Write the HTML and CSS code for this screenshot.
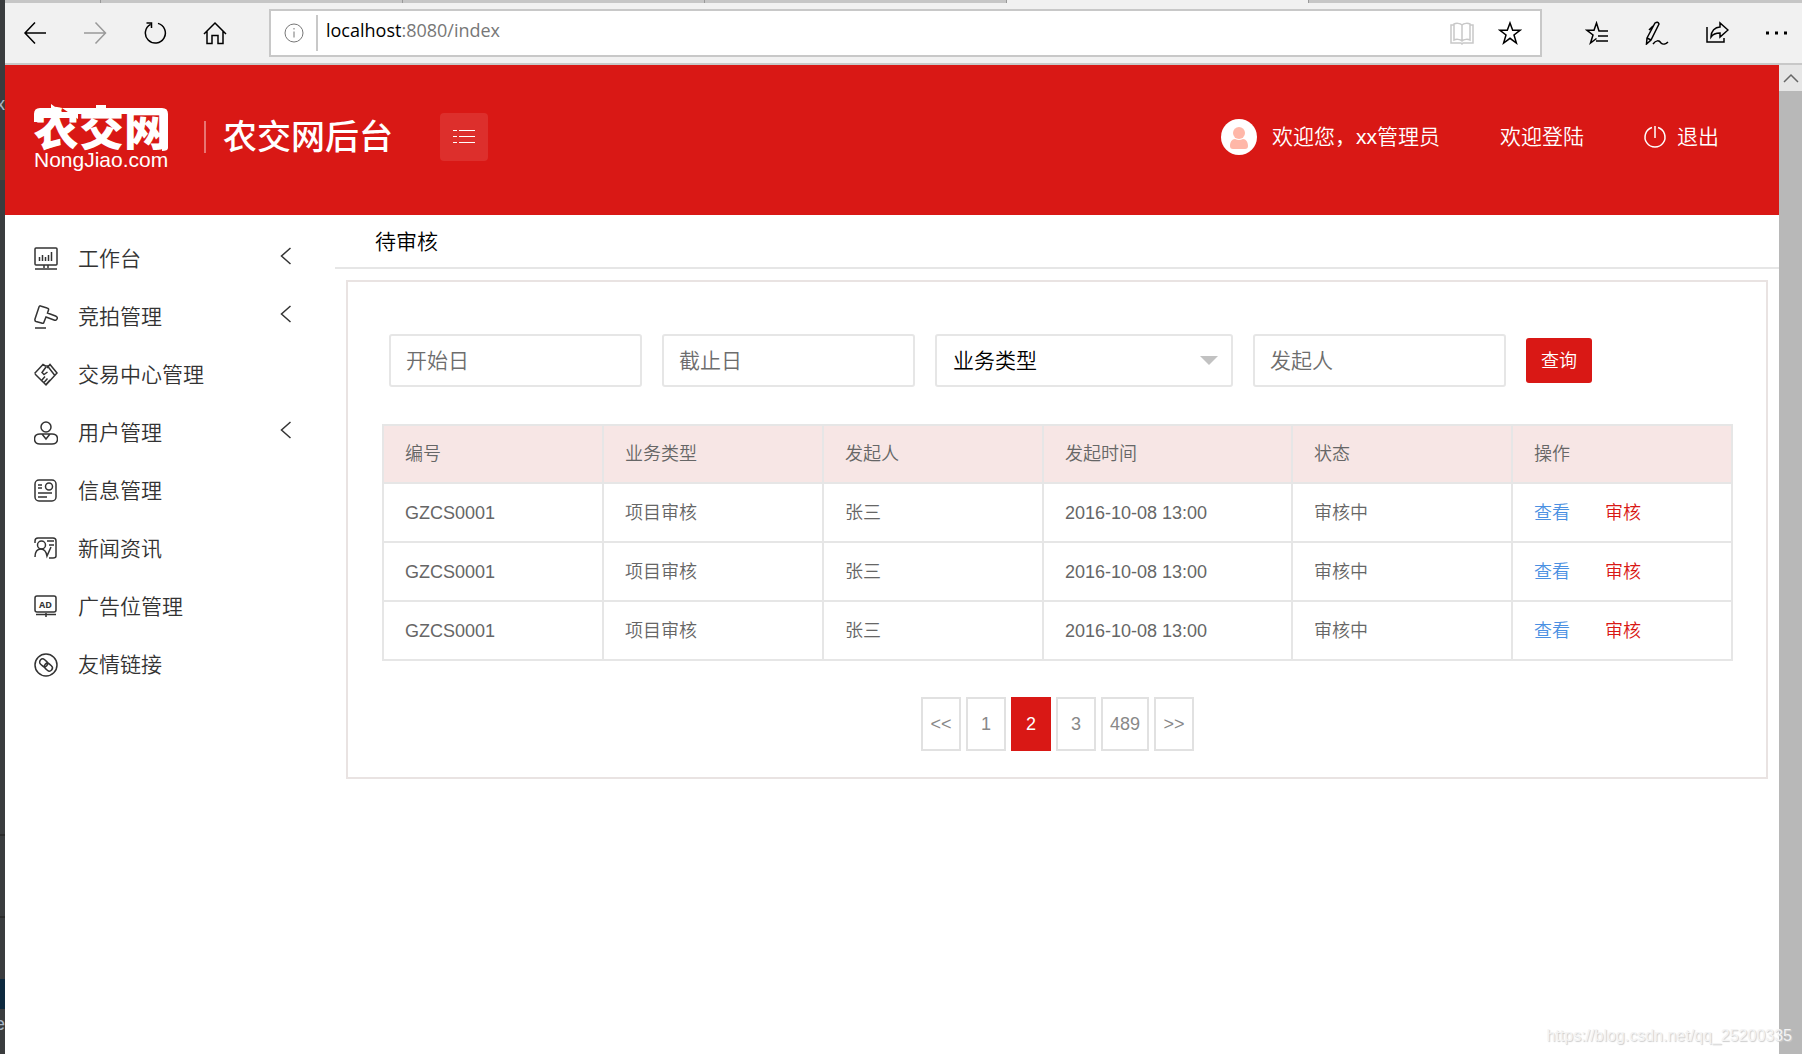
FILE: index.html
```html
<!DOCTYPE html>
<html lang="zh-CN">
<head>
<meta charset="utf-8">
<meta name="viewport" content="width=device-width, initial-scale=1">
<title>农交网后台</title>
<link rel="stylesheet" href="styles.css">
</head>
<body>
<div class="desktop">
  <div class="backdrop" aria-hidden="true"><span>x</span><span>e</span></div>
  <div class="browser">
    <div class="tabs"><span class="tab tab-small"></span><span class="tab"></span><span class="tab"></span><span class="tab"></span><span class="tab tab-active"></span></div>
    <div class="toolbar">
      <div class="nav-buttons">
        <button class="tool" aria-label="后退"><svg width="24" height="24" viewBox="0 0 24 24"><path d="M23 12H2M12 1.500L2 12l10 10.500"/></svg></button>
        <button class="tool tool-off" aria-label="前进"><svg width="24" height="24" viewBox="0 0 24 24"><path d="M1 12h21.500M12.500 1.500l10 10.500-10 10.500"/></svg></button>
        <button class="tool" aria-label="刷新"><svg width="24" height="24" viewBox="0 0 24 24"><path d="M15 2.400A10 10 0 1 1 7.500 3.300M3.500 2h5v5"/></svg></button>
        <button class="tool" aria-label="主页"><svg width="24" height="24" viewBox="0 0 24 24"><path d="M1 13L12 2l11 11M4 10.500V22.500h5v-8h6v8h5v-12"/></svg></button>
      </div>
      <div class="address">
        <svg class="info" width="22" height="22" viewBox="0 0 22 22"><circle cx="11" cy="11" r="9"/><path d="M11 9.500v6M11 6v1.500"/></svg>
        <div class="url"><b>localhost</b>:8080/index</div>
        <button class="tool tool-faint" aria-label="阅读视图"><svg width="24" height="24" viewBox="0 0 24 24"><path d="M12 4c-2-2-6-2-8-1v16c2-1 6-1 8 1 2-2 6-2 8-1V3c-2-1-6-1-8 1v16M4 4H1v18h10l1 1 1-1h10V4h-3"/></svg></button>
        <button class="tool" aria-label="收藏"><svg width="24" height="24" viewBox="0 0 24 24"><path d="M12 2l2.700 7.300H22l-6 4.700 2.400 8L12 17.300 5.600 22 8 14 2 9.300h7.300z"/></svg></button>
      </div>
      <div class="hub-buttons">
        <button class="tool" aria-label="中心"><svg width="24" height="24" viewBox="0 0 24 24"><path d="M23 10h-9l-2.500-8L9 9.300H2L8 14l-2.500 8 6-4.500M13 15h10M11 20h12"/></svg></button>
        <button class="tool" aria-label="笔记"><svg width="24" height="24" viewBox="0 0 24 24"><path d="M2 17L10 2q3-2 4 1L6 19l-4.500 4zM8 5L4 9M2 17l4 2M8 23c3-4 6-4 8-1 2 2 5 1 7-1"/></svg></button>
        <button class="tool" aria-label="分享"><svg width="24" height="24" viewBox="0 0 24 24"><path d="M2 6v15h17v-4M6 16c0-6 4-10 9-10V2l8 7-8 7v-4c-4 0-7 1-9 4z"/></svg></button>
        <button class="tool" aria-label="更多"><svg width="24" height="24" viewBox="0 0 24 24"><path d="M1 12h3M10 12h3M19 12h3" stroke-width="3"/></svg></button>
      </div>
    </div>
    <div class="viewport">
      <div class="page">
        <header class="header">
          <svg class="logo" width="136" height="70" viewBox="0 0 136 70" role="img" aria-label="农交网 NongJiao.com">
            <text class="logo-name" x="0" y="44">农交网</text>
            <path d="M0 20V12q0-6 6-6h11V2l14 10H8v8zM28 6h34V3h10v3h56q6 0 6 6v34q0 3-6 3V12H44v5z"/>
            <text class="logo-domain" x="0" y="65">NongJiao.com</text>
          </svg>
          <h1 class="site-title">农交网后台</h1>
          <button class="menu-toggle" aria-label="菜单"><svg width="22" height="16" viewBox="0 0 22 16"><path d="M0 1.500h4M6 1.500h16M0 7.500h4M6 7.500h16M0 13.500h4M6 13.500h16"/></svg></button>
          <div class="account">
            <svg class="avatar" width="36" height="36" viewBox="0 0 36 36"><circle cx="18" cy="18" r="18" fill="#fff"/><circle cx="18" cy="14" r="6" fill="#ffb7a8"/><path d="M9 27c0-4 2-7 5-7q4 2 8 0c3 0 5 3 5 7q0 3-3 3H12q-3 0-3-3z" fill="#ffb7a8"/></svg>
            <span class="welcome">欢迎您，xx管理员</span>
            <a class="login" href="#">欢迎登陆</a>
            <a class="logout" href="#"><svg width="24" height="24" viewBox="0 0 24 24"><path d="M9 2.500a10 10 0 1 0 6 0M12 1v12"/></svg>退出</a>
          </div>
        </header>
        <div class="body">
          <nav class="sidebar">
            <a href="#"><svg width="24" height="24" viewBox="0 0 24 24"><rect x="1" y="1" width="22" height="17" rx="1"/><path d="M10 18v3M14 18v3M1 22h22M5.500 10v4M8.500 8v6M11.500 10v4M14.500 8v6M17.500 5v9"/></svg><span>工作台</span><svg class="arrow" width="12" height="18" viewBox="0 0 12 18"><path d="M10.500 1l-9 8 9 8"/></svg></a>
            <a href="#"><svg width="24" height="24" viewBox="0 0 24 24"><path d="M6.500 1l6.500 2q2 .5 1.500 2l-1 3 8 3q2.500 1 1.500 3t-3 1l-8-3-2 5q-.5 2-2.500 1L2 16.500Q.5 16 1 14L5 2q.5-1.500 1.500-1zM1 23h11"/></svg><span>竞拍管理</span><svg class="arrow" width="12" height="18" viewBox="0 0 12 18"><path d="M10.500 1l-9 8 9 8"/></svg></a>
            <a href="#"><svg width="24" height="24" viewBox="0 0 24 24"><path d="M.500 10.500L9 1.500l2.500 1.500M1 11l11 11 11-12-7-8.500-3 3.500M11.500 3h2l7 9M12 4L8 9.500l2 2 3.500-2.500M8 17l3-3.500M10 19.500l3.500-4M12 21.500l4-4.500"/></svg><span>交易中心管理</span></a>
            <a href="#"><svg width="24" height="24" viewBox="0 0 24 24"><circle cx="12" cy="6" r="5"/><path d="M8 13H6q-5.500 0-5.500 5T6 23h12q5.500 0 5.500-5T18 13h-2l-4 5-4-5zM8 13h8"/></svg><span>用户管理</span><svg class="arrow" width="12" height="18" viewBox="0 0 12 18"><path d="M10.500 1l-9 8 9 8"/></svg></a>
            <a href="#"><svg width="24" height="24" viewBox="0 0 24 24"><rect x="1" y="1" width="21" height="21" rx="4"/><circle cx="15" cy="7.500" r="3.500"/><path d="M4 6h4M4 9h4M4 14h14M4 18h9"/></svg><span>信息管理</span></a>
            <a href="#"><svg width="24" height="24" viewBox="0 0 24 24"><path d="M1 6V4q0-3 3-3h15q3 0 3 3v15q0 2-3 2h-4M13 4h7M15 8h5M1 20c0-5 2-8 6-8 3 0 5 2 6 7l4-9"/><circle cx="7.500" cy="8" r="4"/></svg><span>新闻资讯</span></a>
            <a href="#"><svg width="24" height="24" viewBox="0 0 24 24"><rect x="1" y="1" width="21" height="16" rx="2"/><path d="M2 19.500h20M12 18v4"/><text class="ad" x="5" y="13">AD</text></svg><span>广告位管理</span></a>
            <a href="#"><svg width="24" height="24" viewBox="0 0 24 24"><circle cx="12" cy="12" r="11"/><g transform="rotate(42 12 12)"><rect x="4.500" y="9" width="8.500" height="6" rx="3"/><rect x="11" y="9" width="8.500" height="6" rx="3"/></g></svg><span>友情链接</span></a>
          </nav>
          <main class="content">
            <h2 class="page-title">待审核</h2>
            <section class="panel">
              <form class="filters">
                <input type="text" placeholder="开始日" aria-label="开始日">
                <input type="text" placeholder="截止日" aria-label="截止日">
                <div class="select"><select aria-label="业务类型"><option>业务类型</option></select></div>
                <input type="text" placeholder="发起人" aria-label="发起人">
                <button class="search" type="button">查询</button>
              </form>
              <table class="records">
                <colgroup><col><col><col><col class="col-time"><col><col></colgroup>
                <thead><tr><th>编号</th><th>业务类型</th><th>发起人</th><th>发起时间</th><th>状态</th><th>操作</th></tr></thead>
                <tbody>
                  <tr><td>GZCS0001</td><td>项目审核</td><td>张三</td><td>2016-10-08 13:00</td><td>审核中</td><td><a class="view" href="#">查看</a><a class="audit" href="#">审核</a></td></tr>
                  <tr><td>GZCS0001</td><td>项目审核</td><td>张三</td><td>2016-10-08 13:00</td><td>审核中</td><td><a class="view" href="#">查看</a><a class="audit" href="#">审核</a></td></tr>
                  <tr><td>GZCS0001</td><td>项目审核</td><td>张三</td><td>2016-10-08 13:00</td><td>审核中</td><td><a class="view" href="#">查看</a><a class="audit" href="#">审核</a></td></tr>
                </tbody>
              </table>
              <div class="pager">
                <a href="#">&lt;&lt;</a><a href="#">1</a><a class="current" href="#">2</a><a href="#">3</a><a href="#">489</a><a href="#">&gt;&gt;</a>
              </div>
            </section>
          </main>
        </div>
      </div>
      <div class="scrollbar"><button class="scroll-up" aria-label="向上滚动"><svg width="16" height="10" viewBox="0 0 16 10"><path d="M1 9l7-7 7 7"/></svg></button></div>
    </div>
  </div>
  <div class="watermark">https://blog.csdn.net/qq_25200335</div>
</div>
</body>
</html>
```
FILE: styles.css
```css
* { box-sizing: border-box; }
body {
  margin: 0;
  font-family: "Liberation Sans", "Noto Sans CJK SC", sans-serif;
  font-size: 21px;
  font-weight: 350;
  line-height: 28px;
  color: #000;
  background: #fff;
}
a { color: inherit; text-decoration: none; }
button, input, select { font: inherit; margin: 0; }
button { padding: 0; border: 0; background: none; }
svg { display: block; flex: none; fill: none; stroke: currentColor; }

.desktop { position: relative; display: flex; min-height: 100vh; }
.backdrop {
  flex: none;
  width: 5px;
  overflow: hidden;
  display: flex;
  flex-direction: column;
  justify-content: space-between;
  align-items: flex-end;
  padding: 90px 0 16px;
  color: #a9b7c6;
  font-size: 18px;
  background:
    linear-gradient(#4a4538, #4a4538) 0 150px / 5px 30px no-repeat,
    linear-gradient(#0d293e, #0d293e) 0 calc(100% - 45px) / 5px 30px no-repeat,
    linear-gradient(#2b2b2b, #2b2b2b) 0 calc(100% - 136px) / 5px 2px no-repeat,
    linear-gradient(#2b2b2b, #2b2b2b) 0 calc(100% - 218px) / 5px 2px no-repeat,
    #3a3c3e;
}
.browser { flex: 1; min-width: 0; display: flex; flex-direction: column; }

/* Browser chrome */
.tabs { height: 3px; display: flex; background: #c6c6c6; }
.tab { width: 302px; border-right: 1px solid #999; }
.tab-small { width: 96px; }
.tab-active { background: #f1f1f1; }
.toolbar {
  height: 62px;
  display: flex;
  align-items: center;
  background: #f1f1f1;
  border-bottom: 2px solid #c8c8c8;
}
.tool { display: block; color: #000; }
.tool svg { stroke-width: 1.5; }
.tool-off { color: #999; }
.tool-faint { color: #c8c8c8; }
.nav-buttons { display: flex; gap: 36px; padding: 0 42px 0 18px; }
.address {
  flex: 1;
  height: 48px;
  display: flex;
  align-items: center;
  gap: 24px;
  padding: 0 18px 0 12px;
  background: #fff;
  border: 2px solid #c8c8c8;
}
.info { color: #777; margin-right: -13px; }
.url {
  flex: 1;
  height: 36px;
  padding-left: 8px;
  border-left: 2px solid #c8c8c8;
  font-family: "Open Sans", sans-serif;
  font-size: 18px;
  font-weight: 400;
  line-height: 30px;
  color: #777;
}
.url b { font-weight: 400; color: #000; }
.hub-buttons { display: flex; gap: 36px; padding: 0 13px 0 43px; }

.viewport { flex: 1; display: flex; }
.page { flex: 1; min-width: 0; }
.scrollbar { width: 23px; background: #b8b8b8; }
.scroll-up {
  width: 100%;
  height: 26px;
  display: grid;
  place-items: center;
  background: #e6e6e6;
  color: #666;
}
.scroll-up svg { stroke-width: 1.5; }

/* Site header */
.header {
  height: 150px;
  display: flex;
  align-items: center;
  padding: 0 60px 6px 29px;
  color: #fff;
  background: #d91815;
}
.logo { fill: #fff; stroke: none; overflow: visible; }
.logo-name { font: 900 45px "Noto Sans CJK SC", sans-serif; }
.logo-domain { font: 400 21px "Liberation Sans", sans-serif; }
.site-title {
  margin: 0 0 0 34px;
  padding-left: 17px;
  border-left: 2px solid #e87472;
  font-size: 34px;
  font-weight: 500;
  line-height: 32px;
}
.menu-toggle {
  width: 48px;
  height: 48px;
  margin-left: 47px;
  display: grid;
  place-items: center;
  border-radius: 4px;
  color: #fff;
  background: #dd2f2c;
}
.account { display: flex; align-items: center; margin-left: auto; }
.avatar { stroke: none; margin-right: 15px; }
.login { margin: 0 59px 0 60px; }
.logout { display: flex; align-items: center; gap: 10px; }
.logout svg { stroke-width: 1.5; }

/* Navigation */
.body { display: flex; }
.sidebar { flex: none; width: 330px; padding: 15px 43px 0 29px; color: #333; }
.sidebar a { display: flex; align-items: center; gap: 20px; height: 58px; }
.sidebar svg { stroke-width: 1.5; }
.sidebar .arrow { margin: 0 0 6px auto; }
.ad { font: 700 9px "Open Sans", sans-serif; fill: #333; stroke: none; }

/* Content */
.content { flex: 1; min-width: 0; }
.page-title {
  margin: 0;
  padding: 13px 40px 11px;
  border-bottom: 2px solid #e6e6e6;
  font-size: 21px;
  font-weight: 350;
}
.panel { margin: 11px 11px 0; padding: 52px 33px 26px 34px; border: 2px solid #e9e3e2; }
.filters { display: flex; align-items: center; gap: 20px; padding: 0 7px; }
.filters input {
  width: 253px;
  height: 53px;
  padding: 0 15px;
  border: 2px solid #e6e6e6;
  border-radius: 3px;
  background: #fff;
}
.filters input::placeholder { color: #6d6d6d; opacity: 1; }
.select { display: grid; align-items: center; width: 298px; }
.select::after {
  content: "";
  grid-area: 1 / 1;
  justify-self: end;
  margin-right: 15px;
  border: 9px solid transparent;
  border-top-color: #c2c2c2;
  border-bottom: 0;
  pointer-events: none;
}
.select select {
  grid-area: 1 / 1;
  width: 100%;
  height: 53px;
  padding: 0 16px;
  appearance: none;
  border: 2px solid #e6e6e6;
  border-radius: 3px;
  color: #000;
  background: #fff;
}
.search {
  width: 66px;
  height: 45px;
  border-radius: 3px;
  font-size: 18px;
  color: #fff;
  background: #d91815;
}
.records {
  width: 100%;
  margin-top: 37px;
  table-layout: fixed;
  border-collapse: collapse;
  font-size: 18px;
  color: #666;
}
.col-time { width: 249px; }
.records th, .records td {
  height: 59px;
  padding: 0 21px;
  border: 2px solid #e6e6e6;
  text-align: left;
}
.records th { height: 58px; font-weight: 350; background: #f7e6e5; }
.view { color: #4a90e2; }
.audit { margin-left: 35px; color: #d91815; }
.pager { display: flex; justify-content: center; gap: 5px; margin-top: 36px; }
.pager a {
  min-width: 40px;
  padding: 11px 7px;
  border: 2px solid #e1e1e1;
  font-size: 18px;
  text-align: center;
  color: #888;
}
.pager .current { color: #fff; border-color: #d91815; background: #d91815; }

.watermark {
  position: absolute;
  right: 10px;
  bottom: 4px;
  font-size: 16px;
  color: #f4f4f4;
  text-shadow: 1px 1px 1px #ccc;
}
```
